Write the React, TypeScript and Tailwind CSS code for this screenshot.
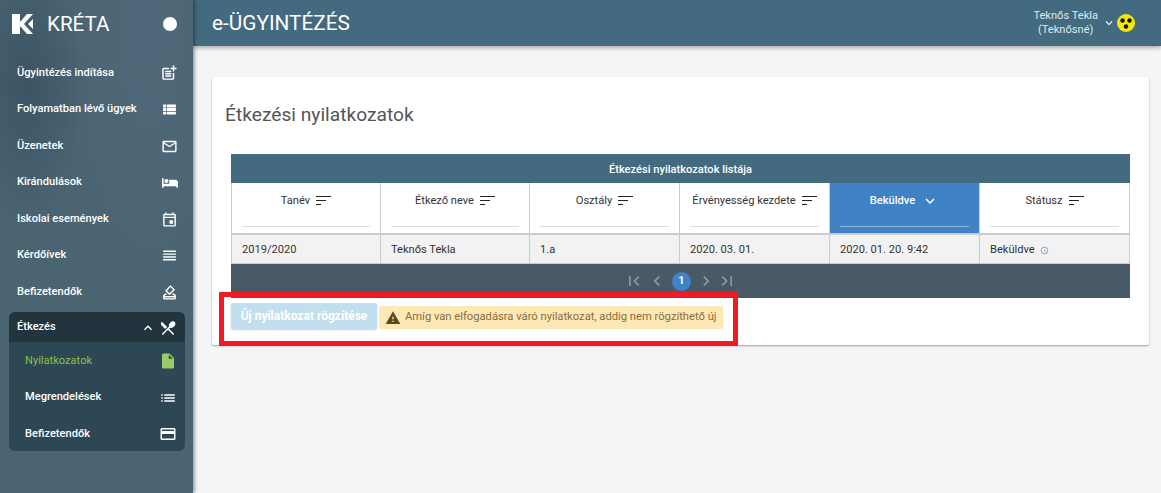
import {
  MdPostAdd,
  MdViewList,
  MdMailOutline,
  MdOutlineEvent,
  MdReorder,
  MdOutlineHowToVote,
  MdRestaurantMenu,
  MdInsertDriveFile,
  MdList,
  MdCreditCard,
  MdExpandLess,
  MdExpandMore,
  MdFirstPage,
  MdLastPage,
  MdChevronLeft,
  MdChevronRight,
  MdWarning,
  MdAccessTime,
} from 'react-icons/md';
import { FaBed } from 'react-icons/fa';

const navItems = [
  { label: 'Ügyintézés indítása', icon: <MdPostAdd className="w-[18px] h-[18px]" /> },
  { label: 'Folyamatban lévő ügyek', icon: <MdViewList className="w-[17px] h-[17px]" /> },
  { label: 'Üzenetek', icon: <MdMailOutline className="w-[17px] h-[17px]" /> },
  { label: 'Kirándulások', icon: <FaBed className="w-[16px] h-[16px]" /> },
  { label: 'Iskolai események', icon: <MdOutlineEvent className="w-[17px] h-[17px]" /> },
  { label: 'Kérdőívek', icon: <MdReorder className="w-[17px] h-[17px]" /> },
  { label: 'Befizetendők', icon: <MdOutlineHowToVote className="w-[17px] h-[17px]" /> },
];

const columns = [
  { label: 'Tanév', value: '2019/2020' },
  { label: 'Étkező neve', value: 'Teknős Tekla' },
  { label: 'Osztály', value: '1.a' },
  { label: 'Érvényesség kezdete', value: '2020. 03. 01.' },
  { label: 'Beküldve', value: '2020. 01. 20. 9:42', active: true },
  { label: 'Státusz', value: 'Beküldve', status: true },
];

function SortIcon() {
  return (
    <svg width="15" height="10" viewBox="0 0 15 10" className="shrink-0">
      <rect x="0" y="0" width="15" height="1" fill="#222" />
      <rect x="0" y="4" width="10" height="1" fill="#222" />
      <rect x="0" y="8" width="5" height="1" fill="#222" />
    </svg>
  );
}

function Logo() {
  return (
    <svg width="21" height="20" viewBox="0 0 21 20" className="shrink-0">
      <path d="M0 0H8V8L15 0H21L12 10L21 20H15L8 12V20H0Z" fill="#fff" />
      <path d="M21 5V15L16 10Z" fill="#fff" />
    </svg>
  );
}

function BlindIcon() {
  return (
    <svg width="18" height="18" viewBox="0 0 18 18" className="shrink-0">
      <circle cx="9" cy="9" r="9" fill="#f5e60a" />
      <circle cx="5.5" cy="6.5" r="2.2" fill="#111" />
      <circle cx="12.5" cy="6.5" r="2.2" fill="#111" />
      <circle cx="9" cy="12.5" r="2.2" fill="#111" />
    </svg>
  );
}

export default function App() {
  return (
    <div className="relative flex h-[493px] w-[1161px] overflow-hidden bg-[#f5f5f5] font-['Roboto',sans-serif]">
      {/* Sidebar */}
      <aside className="z-10 flex w-[193px] shrink-0 flex-col bg-[#4a6472] bg-[radial-gradient(ellipse_at_25px_85px,#3b5565_0%,transparent_60px),radial-gradient(ellipse_at_150px_30px,#50697a_0%,transparent_90px)] text-white shadow-[1px_0_4px_rgba(0,0,0,0.5)]">
        <div className="flex h-[48px] shrink-0 items-center pl-[12px] pr-[16px]">
          <Logo />
          <span className="ml-[14px] text-[20.6px] leading-none">KRÉTA</span>
          <span className="ml-auto h-[14px] w-[14px] rounded-full bg-white" />
        </div>
        <nav className="mt-[7px] flex flex-col">
          {navItems.map((item) => (
            <div
              key={item.label}
              className="flex h-[36.5px] items-center justify-between pl-[17px] pr-[15px] text-[11.1px] font-medium"
            >
              <span>{item.label}</span>
              {item.icon}
            </div>
          ))}
        </nav>
        {/* Open group */}
        <div className="ml-[9px] mr-[8px] mt-px overflow-hidden rounded-[6px] bg-[#2d4755]">
          <div className="flex h-[30px] items-center bg-[#22353f] pl-[8px] pr-[8px] pt-[2px] text-[11.1px] font-medium">
            <span>Étkezés</span>
            <MdExpandLess className="ml-auto h-[16px] w-[16px]" />
            <MdRestaurantMenu className="ml-[3px] h-[18px] w-[18px]" />
          </div>
          <div className="flex h-[36.5px] items-center justify-between pl-[16px] pr-[8px] pt-[3px] text-[11.1px] text-[#8bc34a]">
            <span>Nyilatkozatok</span>
            <MdInsertDriveFile className="h-[18px] w-[18px] text-[#9ccc65]" />
          </div>
          <div className="flex h-[36.5px] items-center justify-between pl-[16px] pr-[8px] pt-[3px] text-[11.1px] font-medium">
            <span>Megrendelések</span>
            <MdList className="h-[18px] w-[18px]" />
          </div>
          <div className="flex h-[36.5px] items-center justify-between pl-[16px] pr-[8px] pt-[3px] text-[11.1px] font-medium">
            <span>Befizetendők</span>
            <MdCreditCard className="h-[18px] w-[18px]" />
          </div>
        </div>
      </aside>

      <div className="flex min-w-0 flex-1 flex-col">
        {/* Header */}
        <header className="flex h-[46px] shrink-0 items-center bg-[#436a7f] pl-[19px] pr-[26px] text-white shadow-[0_2px_4px_rgba(0,0,0,0.3)]">
          <h1 className="text-[20.8px] font-normal leading-none">e-ÜGYINTÉZÉS</h1>
          <div className="ml-auto flex items-center">
            <div className="text-center text-[11.1px] leading-[14px] text-[#dfe8ee]">
              <div>Teknős Tekla</div>
              <div>(Teknősné)</div>
            </div>
            <MdExpandMore className="ml-[4px] h-[14px] w-[14px]" />
            <span className="ml-[1px]">
              <BlindIcon />
            </span>
          </div>
        </header>

        {/* Card */}
        <main className="px-[12px] pl-[19px] pt-[31px]">
          <section className="h-[268px] w-[937px] rounded-[2px] bg-white px-[19px] pt-[26px] shadow-[0_1px_2px_rgba(0,0,0,0.35)]">
            <h2 className="ml-[-6px] text-[19.2px] font-normal leading-[24px] text-[#555]">Étkezési nyilatkozatok</h2>
            <div className="mt-[27px] w-[899px]">
              <div className="flex h-[29px] items-center justify-center bg-[#436a7f] pt-[3px] text-[11.1px] font-medium text-white">
                Étkezési nyilatkozatok listája
              </div>
              <div className="grid grid-cols-[149px_149px_150px_150px_150px_149px] border-x border-[#ccc]">
                {columns.map((col, i) => (
                  <div
                    key={col.label}
                    className={`flex h-[52px] flex-col border-b-2 border-[#ccc] px-[10px] pt-[11px] ${
                      i < 5 ? 'border-r' : ''
                    } ${col.active ? 'bg-[#3f83c6] font-medium text-white' : 'bg-white text-[#333]'}`}
                  >
                    <div className="flex h-[14px] items-center justify-center gap-[6px] whitespace-nowrap text-[11.1px]">
                      <span>{col.label}</span>
                      {col.active ? <MdExpandMore className="h-[18px] w-[18px]" /> : <SortIcon />}
                    </div>
                    <div className={`mt-[18px] h-px ${col.active ? 'bg-[#8fb6dd]' : 'bg-[#ddd]'}`} />
                  </div>
                ))}
                {columns.map((col, i) => (
                  <div
                    key={col.value}
                    className={`flex h-[29px] items-center gap-[5px] border-b border-[#ccc] bg-[#f2f2f2] px-[10px] pt-[2px] text-[11.1px] text-[#333] ${
                      i < 5 ? 'border-r' : ''
                    }`}
                  >
                    <span>{col.value}</span>
                    {col.status && <MdAccessTime className="h-[9px] w-[9px] text-[#6d9bb5]" />}
                  </div>
                ))}
              </div>
              <div className="flex h-[34px] items-center justify-center bg-[#485a66] text-[#8b9aa3]">
                <MdFirstPage className="h-[20px] w-[20px]" />
                <MdChevronLeft className="ml-[3px] h-[20px] w-[20px]" />
                <span className="mx-[5px] flex h-[19px] w-[19px] items-center justify-center rounded-full bg-[#3f83c6] text-[11px] font-bold text-white">
                  1
                </span>
                <MdChevronRight className="h-[20px] w-[20px]" />
                <MdLastPage className="ml-px h-[20px] w-[20px]" />
              </div>
              <div className="mt-[5px] flex items-end gap-[2px]">
                <button className="flex h-[26px] w-[146px] items-center justify-center rounded-[2px] bg-[#c1dfee] text-[12px] font-bold text-white shadow-[0_1px_2px_rgba(0,0,0,0.2)]">
                  Új nyilatkozat rögzítése
                </button>
                <div className="flex h-[23px] w-[344px] items-center whitespace-nowrap rounded-[2px] bg-[#fee8b4] pl-[6px] text-[11.2px] text-[#8a6d3b]">
                  <MdWarning className="mr-[4px] h-[16px] w-[16px] text-[#5d4a1f]" />
                  <span>Amíg van elfogadásra váró nyilatkozat, addig nem rögzíthető új</span>
                </div>
              </div>
            </div>
          </section>
        </main>
      </div>

      {/* Red highlight drawn over the screenshot */}
      <div className="absolute left-[219px] top-[292px] h-[54px] w-[519px] border-[5px] border-[#ed1c24]" />
    </div>
  );
}
